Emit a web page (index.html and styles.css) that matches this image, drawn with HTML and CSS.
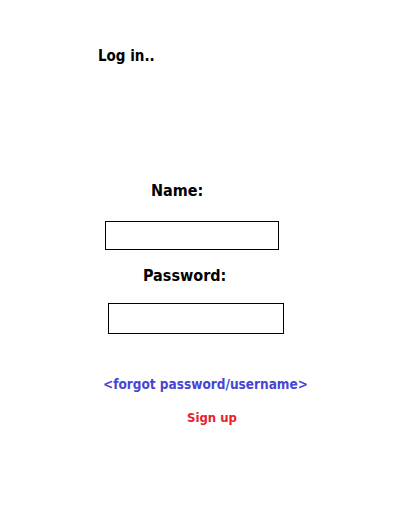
FILE: index.html
```html
<!DOCTYPE html>
<html>
<head>
<meta charset="utf-8">
<link rel="stylesheet" href="styles.css">
</head>
<body>
<main class="page">
  <h1 class="title">Log in..</h1>
  <form class="login">
    <label class="label label-name" for="name">Name:</label>
    <input class="field field-name" id="name" type="text">
    <label class="label label-pass" for="pass">Password:</label>
    <input class="field field-pass" id="pass" type="password">
    <a class="forgot" href="#">&lt;forgot password/username&gt;</a>
    <a class="signup" href="#">Sign up</a>
  </form>
</main>
</body>
</html>
```
FILE: styles.css
```css
html, body {
  margin: 0;
  padding: 0;
  background: #ffffff;
}
body {
  font-family: "DejaVu Sans Condensed", "DejaVu Sans", sans-serif;
  font-stretch: condensed;
  font-weight: bold;
  color: #000;
}
.page {
  display: flex;
  flex-direction: column;
  align-items: flex-start;
}
.title {
  margin: 46px 0 0 98px;
  font-size: 15px;
  line-height: 20px;
  font-weight: bold;
}
.login {
  display: flex;
  flex-direction: column;
  align-items: flex-start;
  margin-top: 115px;
}
.label {
  font-size: 16px;
  line-height: 20px;
}
.label-name {
  margin-left: 151px;
}
.field {
  box-sizing: border-box;
  border: 1px solid #000;
  border-radius: 0;
  background: #fff;
  padding: 0;
  outline: none;
}
.field-name {
  margin: 20px 0 0 105px;
  width: 174px;
  height: 29px;
}
.label-pass {
  margin: 16px 0 0 143px;
}
.field-pass {
  margin: 17px 0 0 108px;
  width: 176px;
  height: 31px;
}
.forgot {
  margin: 42px 0 0 103px;
  font-size: 13.5px;
  line-height: 16px;
  color: #4646d2;
  text-decoration: none;
}
.signup {
  margin: 18px 0 0 187px;
  font-size: 13px;
  line-height: 16px;
  color: #e8202a;
  text-decoration: none;
}
```
